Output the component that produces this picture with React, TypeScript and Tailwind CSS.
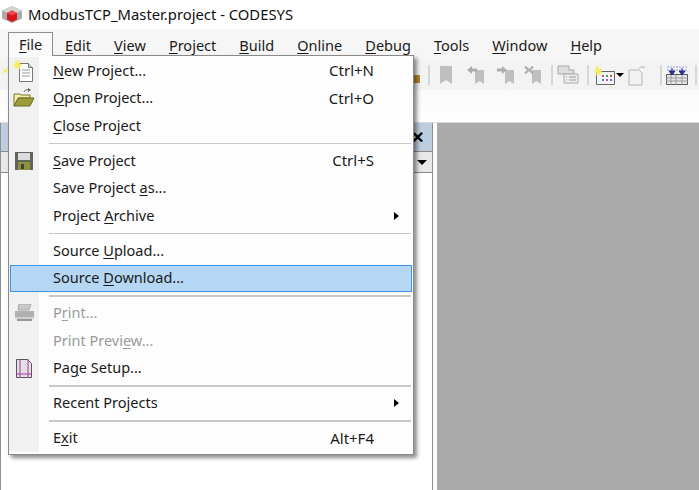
import type { ReactNode } from "react"

const font = { fontFamily: '"Noto Sans", sans-serif' }

function Mn({ children }: { children: ReactNode }) {
  return <span className="underline underline-offset-2 decoration-1">{children}</span>
}

function Logo() {
  return (
    <svg width="20" height="17" viewBox="0 0 20 17">
      <path d="M10 0l10 4.500v8L10 17 0 12.500v-8z" fill="#a9a9a9" />
      <path d="M10 0l10 4.500-10 4.500L0 4.500z" fill="#d4d4d4" />
      <path d="M5 7l5-2.500L15 7v6.500L10 16l-5-2.500z" fill="#d8141c" />
      <path d="M5 7l5 2.500L15 7l-5-2.500z" fill="#f04a4f" />
    </svg>
  )
}

function NewIcon() {
  return (
    <svg width="24" height="24" viewBox="0 0 24 24">
      <path d="M7.500 4.500h9l4 4v14h-13z" fill="#fff" stroke="#777" />
      <path d="M16.500 4.500v4h4" fill="#ddd" stroke="#777" />
      <path d="M10 11h8M10 14h8M10 17h8" stroke="#999" />
      <path d="M5 0l1.500 3.500L10 2 7.500 5 11 6.500 7.500 7.500 9 11 5.500 8.500 3 11l.5-3.500L0 6.500 3.500 5 1.500 2 4.500 3z" fill="#f6ee62" />
    </svg>
  )
}

function OpenIcon() {
  return (
    <svg width="22" height="20" viewBox="0 0 22 20">
      <path d="M1 6h6l1 1h9v3H6l-5 8z" fill="#f5f0a8" stroke="#77772c" />
      <path d="M1 18l4-8h16l-4 8z" fill="#9c9c3a" stroke="#6b6b22" />
      <path d="M11 4c1-2 3-3 6-2" fill="none" stroke="#666" />
      <path d="M15 0l3 2-3 2z" fill="#666" />
    </svg>
  )
}

function SaveIcon() {
  return (
    <svg width="18" height="18" viewBox="0 0 18 18">
      <path d="M0 0h18v18H0z" fill="#5f6656" />
      <path d="M3 1h12v7H3z" fill="#dcdcdc" />
      <path d="M3 10h12v8H3z" fill="#8f9040" />
      <path d="M6 12h3v5H6z" fill="#3f4430" />
    </svg>
  )
}

function PrintIcon() {
  return (
    <svg width="21" height="18" viewBox="0 0 21 18">
      <path d="M5 0h12l-2 6H4z" fill="#c8c8c8" stroke="#a8a8a8" />
      <path d="M1 7h19v6H1z" fill="#b0b0b0" />
      <path d="M1 13h19v2H1z" fill="#d0d0d0" />
      <path d="M3 15h15v2H3z" fill="#989898" />
    </svg>
  )
}

function PageIcon() {
  return (
    <svg width="16" height="19" viewBox="0 0 16 19">
      <path d="M.5.500h11l4 4v14H.5z" fill="#e8dfe4" stroke="#555" />
      <path d="M4 0v19M12 0v19M0 15h16" stroke="#a03aa0" />
    </svg>
  )
}

function MenuRow(props: {
  icon?: ReactNode
  children: ReactNode
  shortcut?: string
  sub?: boolean
  disabled?: boolean
  active?: boolean
}) {
  const { icon, children, shortcut, sub, disabled, active } = props
  return (
    <div className="relative flex h-[27.5px] items-center pr-[2px]">
      <div className="flex h-full w-[30px] shrink-0 items-center justify-center bg-[#f1f1f1]">{icon}</div>
      <div
        className={`flex-1 pb-[2px] pl-[14px] text-[14.5px] leading-none ${disabled ? "text-[#9a9a9a]" : "text-[#1a1a1a]"}`}
      >
        {children}
      </div>
      {shortcut && <div className="absolute right-[39px] text-[15px] leading-none text-[#1a1a1a]">{shortcut}</div>}
      {sub && <div className="absolute right-[14px] h-0 w-0 border-y-[4px] border-l-[5px] border-y-transparent border-l-black" />}
      {active && <div className="absolute inset-x-[1px] inset-y-0 border border-[#3d94e6] bg-[#b5d7f3]" />}
    </div>
  )
}

function Sep() {
  return (
    <div className="flex h-[7.5px] items-center">
      <div className="h-full w-[30px] shrink-0 bg-[#f1f1f1]" />
      <div className="ml-[10px] mr-[2px] h-[1.5px] flex-1 bg-[#c8c8c8]" />
    </div>
  )
}

const menus: [string, string][] = [
  ["E", "dit"],
  ["V", "iew"],
  ["P", "roject"],
  ["B", "uild"],
  ["O", "nline"],
  ["D", "ebug"],
  ["T", "ools"],
  ["W", "indow"],
  ["H", "elp"],
]

function Bookmark({ mark, className }: { mark?: "left" | "right" | "x"; className: string }) {
  return (
    <svg width="20" height="20" viewBox="0 0 20 20" className={className}>
      <path d={mark ? "M9 5h9v14l-4.500-3-4.500 3z" : "M4 1h12v18l-6-4-6 4z"} fill="#bfbfbf" />
      {mark === "left" && <path d="M1 5l5-4v2.500h5v3H6V9z" fill="#adadad" />}
      {mark === "right" && <path d="M11 5L6 1v2.500H1v3h5V9z" fill="#adadad" />}
      {mark === "x" && <path d="M1 2l2-1 3 3 3-3 2 1-3 3 3 3-2 1-3-3-3 3-2-1 3-3z" fill="#adadad" />}
    </svg>
  )
}

function ToolDivider({ className }: { className: string }) {
  return <div className={`h-[20px] w-[2px] shrink-0 bg-[#d6d6d6] ${className}`} />
}

function Toolbar() {
  return (
    <div className="flex h-[30px] items-center overflow-hidden bg-[#f3f3f3] pl-[3px]">
      <svg width="5" height="12" viewBox="0 0 5 12" className="mb-[8px] shrink-0">
        <path d="M0 3l2 2 3-3-1 4 1 2-3-1-2 3 1-4z" fill="#f6ee62" />
      </svg>
      <svg width="6" height="16" viewBox="0 0 6 16" className="ml-[406px] shrink-0">
        <path d="M0 8h6v8H0z" fill="#b8892f" />
      </svg>
      <ToolDivider className="ml-[8px]" />
      <Bookmark className="ml-[6px] shrink-0" />
      <Bookmark mark="left" className="ml-[10px] shrink-0" />
      <Bookmark mark="right" className="ml-[10px] shrink-0" />
      <Bookmark mark="x" className="ml-[7px] shrink-0" />
      <ToolDivider className="ml-[8px]" />
      <svg width="22" height="20" viewBox="0 0 22 20" className="ml-[4px] shrink-0">
        <path d="M1 1h11v4h5v4H1z" fill="#ddd" stroke="#aaa" />
        <path d="M7 9h14v9H7z" fill="#eee" stroke="#aaa" />
        <path d="M12 12h7M12 15h7M9 12h1M9 15h1" stroke="#999" />
      </svg>
      <ToolDivider className="ml-[8px]" />
      <svg width="22" height="20" viewBox="0 0 22 20" className="ml-[4px] shrink-0">
        <path d="M3.500 6.500h18v13h-18z" fill="#f4f4f4" stroke="#666" />
        <path d="M5 1l1 3 3-1-2 3 3 1-3 1 1 3-3-2-2 2 .5-3L0 7l3-1-1-3z" fill="#f6ee62" />
        <path d="M9 10h2v2H9z" fill="#d050a0" />
        <path d="M13 10h2v2h-2z" fill="#3aa06a" />
        <path d="M17 10h2v2h-2z" fill="#d05050" />
        <path d="M9 14h2v2H9z" fill="#5a70c8" />
        <path d="M13 14h2v2h-2z" fill="#d050a0" />
        <path d="M17 14h2v2h-2z" fill="#5a70c8" />
      </svg>
      <div className="ml-[1px] h-0 w-0 shrink-0 border-x-[4px] border-t-[4px] border-x-transparent border-t-black" />
      <svg width="20" height="21" viewBox="0 0 20 21" className="ml-[4px] shrink-0">
        <path d="M1 5h10l3 3v12H1z" fill="#f2f2f2" stroke="#b5b5b5" />
        <path d="M11 4c1-2 4-3 6-1" fill="none" stroke="#aaa" />
      </svg>
      <ToolDivider className="ml-[12px]" />
      <svg width="22" height="20" viewBox="0 0 22 20" className="ml-[4px] shrink-0">
        <path d="M.5 9.500h21v10H.5z" fill="#e8e8e8" stroke="#555" />
        <path d="M0 13h22M0 16h22M5 10v10M10 10v10M16 10v10" stroke="#999" />
        <path d="M1 2h20M1 5h20" stroke="#9aa0d8" strokeDasharray="2 1" />
        <path d="M6 3v5M3 6l3 4 3-4zM16 3v5M13 6l3 4 3-4z" fill="#26308a" stroke="#26308a" />
      </svg>
      <ToolDivider className="ml-[7px]" />
    </div>
  )
}

export default function App() {
  return (
    <div className="relative flex h-[490px] w-[699px] flex-col overflow-hidden bg-white" style={font}>
      <div className="flex h-[29px] items-center gap-[6px] pl-[2px] text-[14.8px] text-[#111]">
        <Logo />
        <span>ModbusTCP_Master.project - CODESYS</span>
      </div>

      <div className="flex h-[31px] items-end gap-[23.1px] bg-[#f6f6f6] pb-[3px] pl-[65px] text-[14.5px] text-[#1a1a1a]">
        {menus.map(([key, rest]) => (
          <span key={key} className="leading-[24px]">
            <Mn>{key}</Mn>
            {rest}
          </span>
        ))}
      </div>

      <Toolbar />

      <div className="h-[32px] bg-gradient-to-b from-[#fafafa] to-white" />

      <div className="flex flex-1 border-t border-[#d9d9d9]">
        <div className="flex w-[433px] flex-col border-x border-[#8f8f8f]">
          <div className="flex h-[28px] items-center justify-end bg-[#bccddd] pr-[8px] text-[16px] font-bold leading-none text-black">
            ✕
          </div>
          <div className="flex h-[22px] items-center justify-end border-y border-[#8a8a8a] bg-[#e8e8e8] pr-[5px]">
            <div className="h-0 w-0 border-x-[5px] border-t-[5px] border-x-transparent border-t-black" />
          </div>
        </div>
        <div className="ml-[4px] flex-1 bg-[#aaaaaa]" />
      </div>

      <div className="absolute left-[8px] top-[32px] z-20 h-[24px] w-[45px] border-x border-t border-[#8f8f8f] bg-[#fafafa] pl-[10px] text-[14.5px] leading-[23px] text-[#1a1a1a]">
        <Mn>F</Mn>ile
      </div>

      <div className="absolute left-[8px] top-[55px] z-10 w-[406px] border border-[#8a8a8a] bg-[#fdfdfd] pb-[2px] pt-[1px] shadow-[3px_3px_4px_rgba(0,0,0,0.45)]">
        <MenuRow icon={<NewIcon />} shortcut="Ctrl+N">
          <Mn>N</Mn>ew Project...
        </MenuRow>
        <MenuRow icon={<OpenIcon />} shortcut="Ctrl+O">
          <Mn>O</Mn>pen Project...
        </MenuRow>
        <MenuRow>
          <Mn>C</Mn>lose Project
        </MenuRow>
        <Sep />
        <MenuRow icon={<SaveIcon />} shortcut="Ctrl+S">
          <Mn>S</Mn>ave Project
        </MenuRow>
        <MenuRow>Save Project <Mn>a</Mn>s...</MenuRow>
        <MenuRow sub>
          Project <Mn>A</Mn>rchive
        </MenuRow>
        <Sep />
        <MenuRow>
          Source <Mn>U</Mn>pload...
        </MenuRow>
        <MenuRow active>
          <span className="relative z-10">
            Source <Mn>D</Mn>ownload...
          </span>
        </MenuRow>
        <Sep />
        <MenuRow icon={<PrintIcon />} disabled>
          P<Mn>r</Mn>int...
        </MenuRow>
        <MenuRow disabled>
          Print Previ<Mn>e</Mn>w...
        </MenuRow>
        <MenuRow icon={<PageIcon />}>
          Pa<Mn>g</Mn>e Setup...
        </MenuRow>
        <Sep />
        <MenuRow sub>
          Recent Pro<Mn>j</Mn>ects
        </MenuRow>
        <Sep />
        <MenuRow shortcut="Alt+F4">
          E<Mn>x</Mn>it
        </MenuRow>
      </div>
    </div>
  )
}
